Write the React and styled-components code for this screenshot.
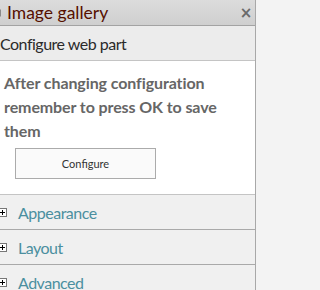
import React from 'react'
import styled, { createGlobalStyle } from 'styled-components'

const GlobalStyle = createGlobalStyle`
  html, body {
    margin: 0;
    padding: 0;
    background: #f3f3f3;
    overflow: hidden;
  }
  body {
    font-family: Lato, "Open Sans", sans-serif;
  }
`

const Page = styled.div`
  width: 263px;
  height: 290px;
  overflow: hidden;
  background: #f3f3f3;
`

const Panel = styled.div`
  width: 263px;
  margin-left: -7px;
  border-right: 1px solid #a8a8a8;
  box-sizing: border-box;
  background: #f0f0f0;
  height: 290px;
`

const Header = styled.div`
  display: flex;
  align-items: center;
  height: 25px;
  padding: 0 0 0 4px;
  background: linear-gradient(#dcdcdc, #cfcfcf);
  border-bottom: 1px solid #a3a3a3;
`

const Arrow = styled.span`
  width: 0;
  height: 0;
  border-top: 4px solid transparent;
  border-bottom: 4px solid transparent;
  border-right: 4px solid #8a8a8a;
  margin-right: 6px;
`

const Title = styled.div`
  flex: 1;
  font-size: 17.5px;
  color: #561000;
`

const Close = styled.div`
  width: 18px;
  font-size: 15px;
  font-weight: bold;
  color: #6a6a6a;
  text-align: center;
  font-family: "DejaVu Sans", sans-serif;
`

const SubHeader = styled.div`
  height: 34px;
  display: flex;
  align-items: center;
  padding-left: 7px;
  background: #ececec;
  border-bottom: 1px solid #c4c4c4;
  font-size: 16px;
  letter-spacing: -0.5px;
  color: #2a2a2a;
`

const Body = styled.div`
  background: #fff;
  padding: 10px 12px 14px 11px;
  border-bottom: 1px solid #c4c4c4;
  height: 109px;
`

const Notice = styled.p`
  margin: 0;
  font-size: 16px;
  font-weight: bold;
  line-height: 24px;
  letter-spacing: -0.1px;
  color: #666;
`

const Button = styled.button`
  display: block;
  margin: 5px 0 0 11px;
  width: 141px;
  height: 31px;
  border: 1px solid #ababab;
  background: #fafafa;
  font-family: Lato, sans-serif;
  font-size: 11px;
  color: #333;
`

const Section = styled.div`
  display: flex;
  align-items: center;
  height: 34px;
  padding-left: 5px;
  border-bottom: 1px solid #a9a9a9;
  background: #f0f0f0;
`

const PlusBox = styled.span`
  position: relative;
  width: 7px;
  height: 7px;
  border: 1px solid #777;
  background: #fff;
  margin-right: 11px;
  &::before,
  &::after {
    content: '';
    position: absolute;
    background: #000;
  }
  &::before {
    left: 1px;
    top: 3px;
    width: 5px;
    height: 1px;
  }
  &::after {
    left: 3px;
    top: 1px;
    width: 1px;
    height: 5px;
  }
`

const SectionLabel = styled.span`
  font-size: 16px;
  letter-spacing: -0.5px;
  color: #4b8f9f;
`

const sections = ['Appearance', 'Layout', 'Advanced']

export default function App() {
  return (
    <Page>
      <GlobalStyle />
      <Panel>
        <Header>
          <Arrow />
          <Title>Image gallery</Title>
          <Close>×</Close>
        </Header>
        <SubHeader>Configure web part</SubHeader>
        <Body>
          <Notice>After changing configuration remember to press OK to save them</Notice>
          <Button>Configure</Button>
        </Body>
        {sections.map((s) => (
          <Section key={s}>
            <PlusBox />
            <SectionLabel>{s}</SectionLabel>
          </Section>
        ))}
      </Panel>
    </Page>
  )
}
